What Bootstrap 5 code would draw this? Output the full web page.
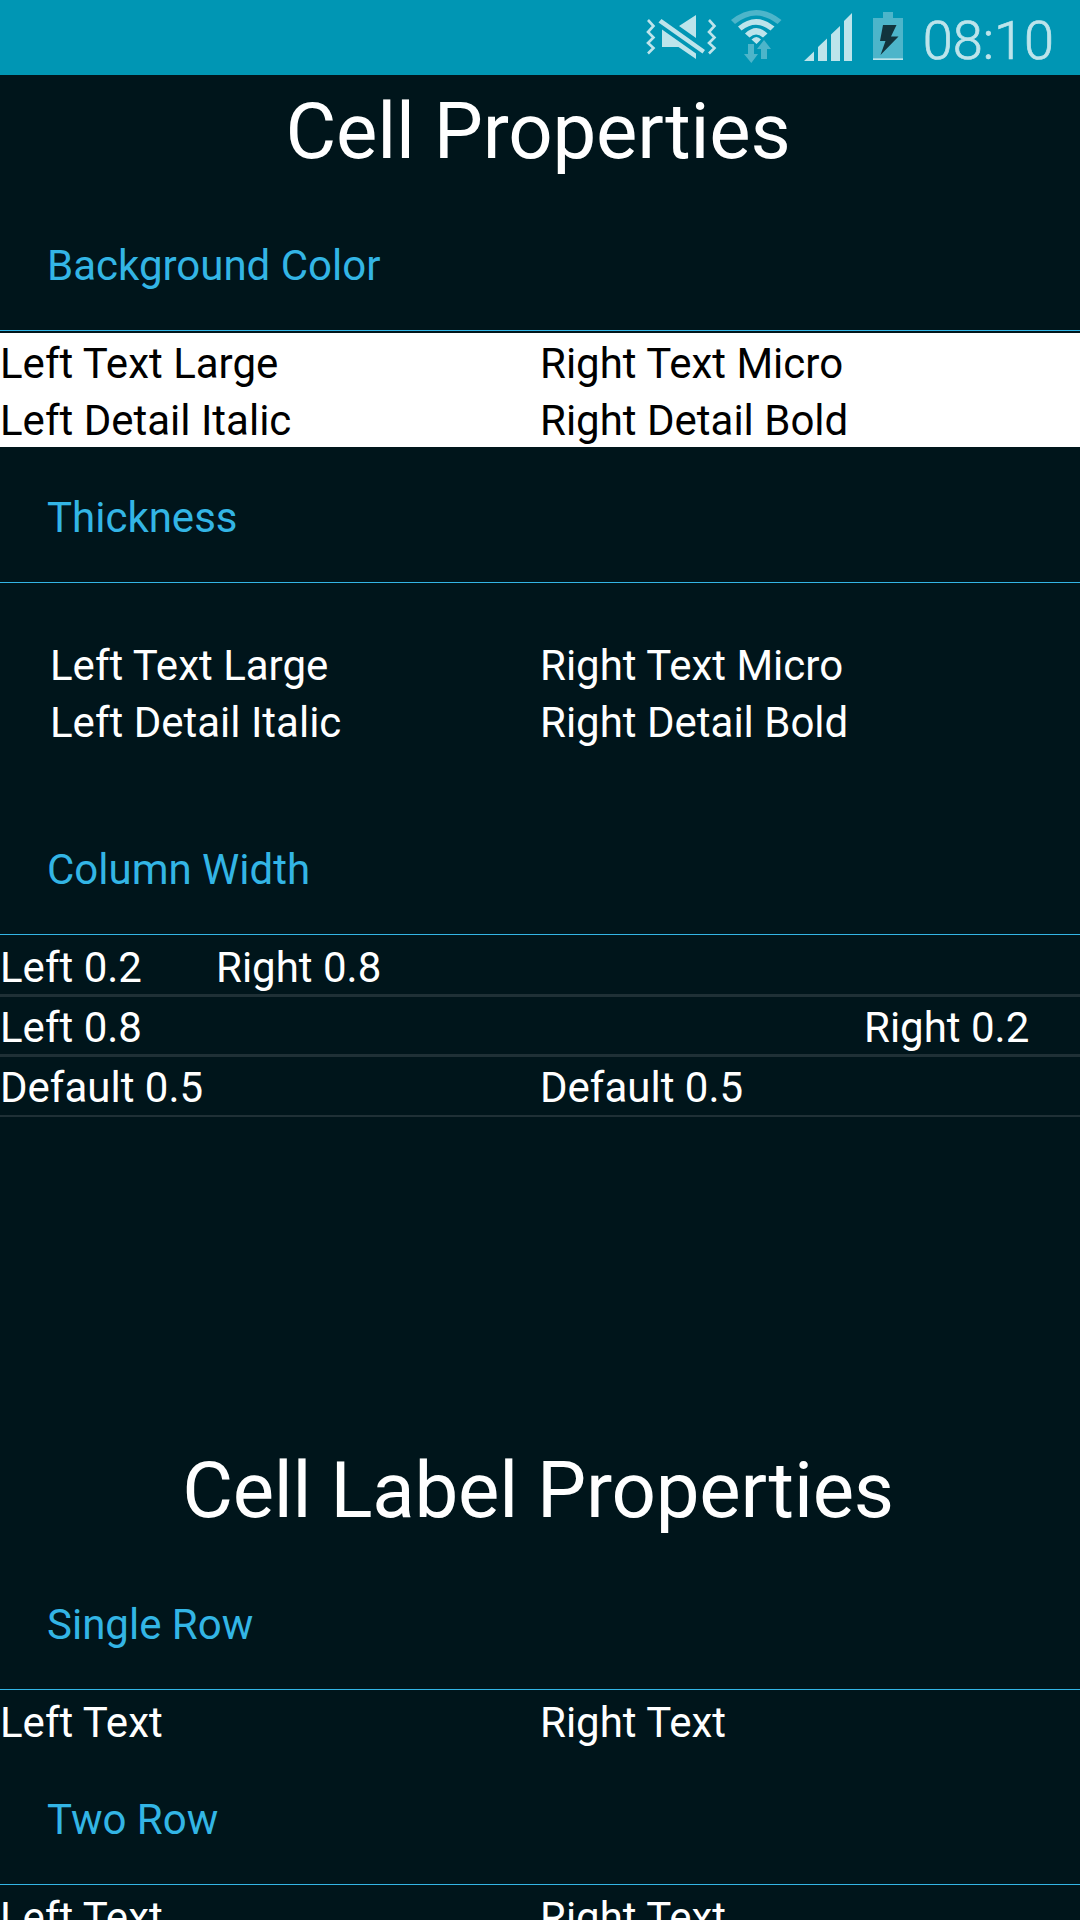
<!DOCTYPE html>
<html lang="en">
<head>
<meta charset="utf-8">
<meta name="viewport" content="width=device-width, initial-scale=1">
<title>Cell Properties</title>
<link href="https://cdn.jsdelivr.net/npm/bootstrap@5.3.0/dist/css/bootstrap.min.css" rel="stylesheet">
<style>
  body { background: #00151b; color: #fff; font: 400 42px/57px Roboto, "Noto Sans", sans-serif; }
  .screen { height: 1920px; }
  .status-bar { height: 75px; background: #0096b4; color: #bde4eb; padding-right: 26px; }
  .status-bar svg { height: 75px; }
  .clock { font-size: 54px; line-height: 75px; font-weight: 300; padding-top: 3px; -webkit-text-stroke: .7px #bde4eb; }
  .page-title { height: 120px; padding: 1px 4px 0 0; font-size: 78px; line-height: 112px; font-weight: 400; letter-spacing: -.22px; }
  .section-title { height: 138px; padding: 42px 0 0 47px; font-size: 42px; line-height: 57px; font-weight: 400; color: #33b5e5; }
  .section-title::after { content: ""; display: block; height: 1px; margin: 36px 0 0 -47px; background: #33b5e5; }
  .cell-row { height: 57px; padding-top: 2px; white-space: nowrap; }
  .inset { padding: 50px 0; }
  .inset .cell-left { padding-left: 50px; }
  .w-20 { width: 20%; }
  .w-80 { width: 80%; }
  .divider { height: 3px; background: #1f3036; }
  .divider-last { height: 2px; margin-top: 1px; }
  .table-gap { height: 317px; }
</style>
</head>
<body>
<div class="screen overflow-hidden d-flex flex-column">
  <header class="status-bar d-flex justify-content-end flex-shrink-0">
    <svg width="90" viewBox="636 0 90 75" fill="#bde4eb">
      <path d="M648 20l5.500 6-5.500 6 5.500 5.500-5.500 5.500 5.500 5-5.500 5.500M709 20l5.500 6-5.500 6 5.500 5.500-5.500 5.500 5.500 5-5.500 5.500" fill="none" stroke="#bde4eb" stroke-width="2.600"/>
      <path d="M661.500 19L705 50l-2.500 3.500L658.500 22.500zM696 15v23l-17-12zM662 29.500L696 53.500v5.500l-17.500-12H662z"/>
    </svg>
    <svg width="66" viewBox="726 0 66 75" fill="#4db5ca">
      <path d="M731 20q25-20 50.500 0l-4 4q-21.500-17-42.500 0z"/>
      <path d="M738 26.500q18-15 36.500 0l-4 4q-14.500-11.500-29 0zM745 33.500q11.500-11 22.500 0l-4.500 4q-7-6-13.500 0zM751.500 39.500q5-5 9.500 0l-4.500 4.500z" fill="#bde4eb"/>
      <path d="M748 44h6v10h4l-6.700 9-7.300-9h4zM764 40l7 9h-4v10h-6V49h-4z"/>
    </svg>
    <svg width="70" viewBox="792 0 70 75" fill="#bde4eb">
      <path d="M804 61l10-9.500V61zM818 61V47l9-8.500V61zM831 61V34.500l9-8.500v35zM844 61V21l8-8v48z"/>
    </svg>
    <svg width="61" viewBox="862 0 61 75">
      <path d="M873 18h10v-6h10v6h10v40h-30z" fill="#4db5ca"/>
      <path d="M873 58.200h30V60h-30z" fill="#bde4eb"/>
      <path d="M883 25h13.500L891 36.500h7.500L880.500 55l5-14H880z" fill="#12343d"/>
    </svg>
    <span class="clock">08:10</span>
  </header>

  <main>
    <h1 class="page-title text-center m-0">Cell Properties</h1>

    <h2 class="section-title m-0">Background Color</h2>
    <div class="bg-white text-black">
      <div class="cell-row d-flex"><div class="w-50">Left Text Large</div><div class="w-50">Right Text Micro</div></div>
      <div class="cell-row d-flex"><div class="w-50">Left Detail Italic</div><div class="w-50">Right Detail Bold</div></div>
    </div>

    <h2 class="section-title m-0">Thickness</h2>
    <div class="inset">
      <div class="cell-row d-flex"><div class="w-50 cell-left">Left Text Large</div><div class="w-50">Right Text Micro</div></div>
      <div class="cell-row d-flex"><div class="w-50 cell-left">Left Detail Italic</div><div class="w-50">Right Detail Bold</div></div>
    </div>

    <h2 class="section-title m-0">Column Width</h2>
    <div class="cell-row d-flex"><div class="w-20">Left 0.2</div><div class="w-80">Right 0.8</div></div>
    <div class="divider"></div>
    <div class="cell-row d-flex"><div class="w-80">Left 0.8</div><div class="w-20">Right 0.2</div></div>
    <div class="divider"></div>
    <div class="cell-row d-flex"><div class="w-50">Default 0.5</div><div class="w-50">Default 0.5</div></div>
    <div class="divider divider-last"></div>
    <div class="table-gap"></div>

    <h1 class="page-title text-center m-0">Cell Label Properties</h1>

    <h2 class="section-title m-0">Single Row</h2>
    <div class="cell-row d-flex"><div class="w-50">Left Text</div><div class="w-50">Right Text</div></div>

    <h2 class="section-title m-0">Two Row</h2>
    <div class="cell-row d-flex"><div class="w-50">Left Text</div><div class="w-50">Right Text</div></div>
  </main>
</div>
<script src="https://cdn.jsdelivr.net/npm/bootstrap@5.3.0/dist/js/bootstrap.bundle.min.js"></script>
</body>
</html>
